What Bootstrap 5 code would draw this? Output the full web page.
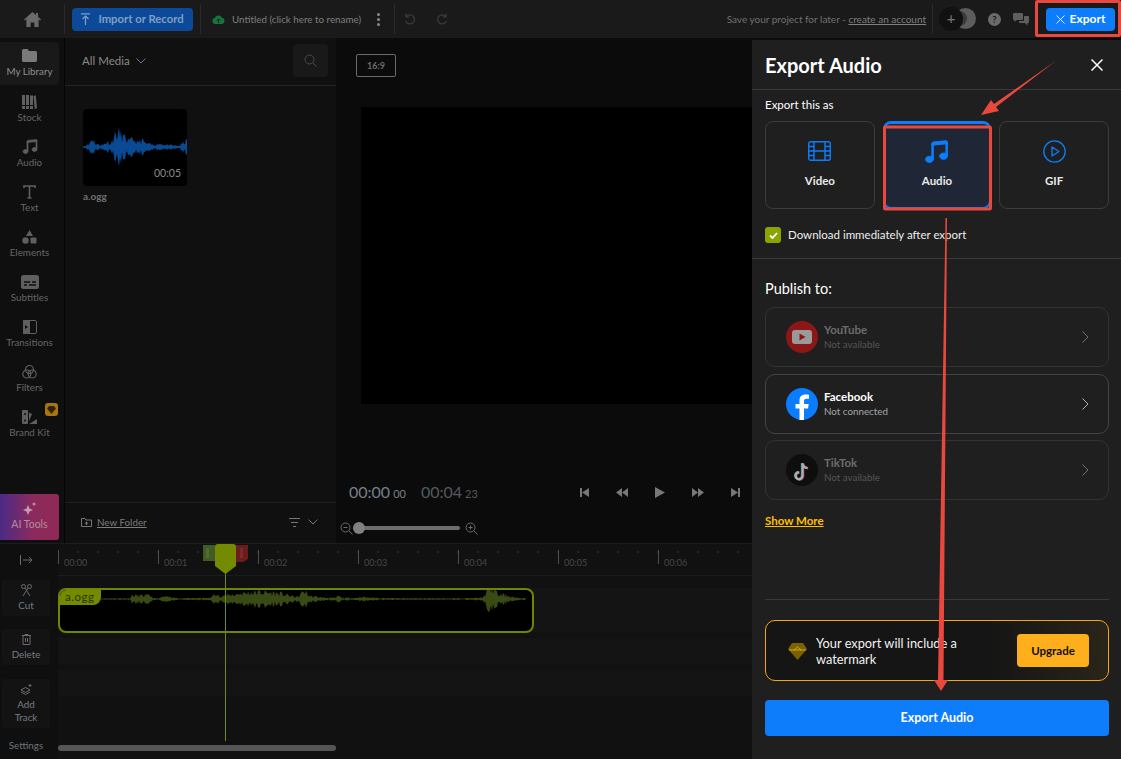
<!doctype html>
<html lang="en">
<head>
<meta charset="utf-8">
<title>Export Audio</title>
<link href="https://cdn.jsdelivr.net/npm/bootstrap@5.3.0/dist/css/bootstrap.min.css" rel="stylesheet">
<style>
html,body{height:100%;}
body{width:1121px;height:759px;overflow:hidden;background:#0b0b0b;font-family:Lato,"Noto Sans",sans-serif;color:#fff;position:relative;}
svg{display:block;flex:none;}
.topbar{height:38px;background:#1a1a1a;padding-right:6px;}
.vsep{width:1px;height:30px;background:#2b2b2b;}
.home{width:64px;}
.btn-import{background:#0c4a99;color:#7f9fc6;font-size:11.3px;font-weight:700;height:23px;width:121px;margin:0 7px;border-radius:4px;}
.doc-title{font-size:9.8px;color:#7e7e7e;margin-left:11px;gap:7px;width:182px;}
.dots{width:3px;margin-left:auto;margin-right:14px;gap:2px;}
.dots i{width:3px;height:3px;border-radius:50%;background:#8a8a8a;display:block;}
.undo{margin-left:9px;gap:20px;}
.save{font-size:10px;color:#707070;margin-right:6px;}
.save u{color:#7f7f7f;}
.avatars{margin:0 13px 0 6px;width:36px;height:26px;position:relative;}
.avatars .plus{position:absolute;left:0;top:1px;width:24px;height:24px;border-radius:50%;background:#111;color:#777;font-size:15px;line-height:23px;text-align:center;}
.avatars .moon{position:absolute;left:16px;top:2px;width:21px;height:21px;border-radius:50%;background:#5d5d5d;}
.avatars .moon2{position:absolute;left:13px;top:5px;width:15px;height:15px;border-radius:50%;background:#3a3a3a;}
.help{margin-right:12px;}
.btn-export{background:#0d7dfb;color:#fff;font-size:12px;font-weight:700;width:69px;height:23px;margin-left:17px;border-radius:4px;gap:5px;}
.workspace{height:721px;}
.left{width:752px;}
.upper{height:505px;}
.sidebar{width:65px;background:#0f0f0f;border-right:1px solid #050505;padding-top:4px;}
.side-item{height:45px;color:#666;font-size:9.8px;line-height:12px;padding-top:6px;position:relative;margin-right:5px;flex:none;}
.side-item.active{background:#191919;color:#8e8e8e;height:43px;margin-bottom:2px;border-radius:0 4px 4px 0;padding-top:5px;}
.side-item svg{height:18px;}
.side-item .pro svg{height:8px;}
.pro{position:absolute;right:1px;top:1px;width:13px;height:13px;border-radius:3px;background:#a8760f;}
.ai{height:46px;margin-right:5px;margin-bottom:3px;border-radius:0 3px 3px 0;background:linear-gradient(90deg,#4b2a86,#8b2a5c 55%,#8f2a55);color:#b78aa2;font-size:10.5px;gap:1px;}
.library{width:271px;background:#101010;}
.lib-head{height:48px;border-bottom:1px solid #242424;padding:0 8px 2px 17px;color:#8a8a8a;font-size:11.5px;gap:6px;}
.search{width:35px;height:33px;margin-left:auto;background:#191919;border-radius:4px;}
.thumb-wrap{padding:23px 18px;flex:1;}
.thumb{width:104px;height:77px;background:#000;border-radius:4px;position:relative;}
.thumb span{position:absolute;right:6px;bottom:4px;font-size:10.5px;color:#8b8b8b;}
.thumb-name{font-size:10px;font-weight:700;color:#6f6f6f;margin-top:3px;}
.lib-foot{height:41px;border-top:1px solid #1f1f1f;padding:0 18px 2px 16px;color:#7d7d7d;font-size:9.8px;gap:5px;}
.sort{margin-right:3px;}
.preview{flex:1;background:#0b0b0b;padding:16px 0 0 20px;min-width:0;}
.ratio{width:40px;height:23px;border:1px solid #6b6b6b;border-radius:2px;color:#6b6b6b;font-size:9px;font-weight:700;}
.stage{height:297px;background:#000;margin:30px 0 0 5px;}
.times{margin:78px 0 0 -7px;height:20px;font-size:16px;color:#73808c;gap:15px;}
.times small{font-size:11px;margin-left:3px;}
.times .dim{color:#55595e;}
.transport{gap:27px;margin-left:87px;}
.zoombar{margin:18px 0 0 -16px;height:16px;}
.track{width:107px;height:4px;border-radius:2px;background:#6e6e6e;position:relative;margin:0 5px 0 0;}
.knob{position:absolute;left:0;top:-4px;width:12px;height:12px;border-radius:50%;background:#808080;}
.timeline{height:216px;background:#111;border-top:1px solid #1c1c1c;position:relative;}
.tools{width:58px;padding-right:6px;background:#0f0f0f;color:#737d86;font-size:9.8px;line-height:13px;text-align:center;}
.tool-top{height:32px;margin-bottom:4px;}
.tool{width:48px;background:#131313;padding:4px 0;gap:3px;border-radius:2px;flex:none;}
.tool.cut{height:36px;margin-bottom:13px;}
.tool.del{height:36px;margin-bottom:14px;padding-top:5px;}
.tool.add{height:49px;padding-top:5px;}
.settings{margin-top:11px;color:#6b747c;}
.tracks{flex:1;min-width:0;}
.ruler{height:32px;flex:none;border-bottom:1px solid #1b1b1b;overflow:hidden;background-image:radial-gradient(circle,#3c3c3c 0.6px,transparent 0.8px);background-size:20px 20px;background-position:10px -2px;background-repeat:repeat-x;}
.tick{width:100px;flex:none;border-left:1px solid #4d4d4d;height:14px;margin-top:6px;padding:7px 0 0 5px;font-size:9px;line-height:12px;color:#474747;}
.row-a{height:44px;margin-top:12px;background:#141414;position:relative;flex:none;}
.clip{width:476px;height:45px;border:2px solid #718500;border-radius:8px;background:#000;position:relative;overflow:hidden;}
.clip-name{position:absolute;left:0;top:0;background:#748a00;color:#2c3300;font-size:11.5px;letter-spacing:.5px;padding:0 7px 1px 5px;line-height:14px;border-radius:6px 0 8px 0;}
.row-b{height:26px;background:#141414;margin-top:6px;flex:none;}
.hscroll{height:6px;width:278px;border-radius:3px;background:#555;margin-top:49px;flex:none;}
.playhead{position:absolute;left:203px;top:0;width:45px;height:197px;}
.panel{width:369px;background:#1f1f1f;margin-top:2px;padding:0 12px 0 13px;}
.panel-head{height:50px;flex:none;margin:0 -12px 0 -13px;padding:0 18px 0 13px;border-bottom:1px solid #3a3a3a;}
.panel-head h1{font-size:20px;font-weight:700;margin:0;}
.lbl{font-size:11.5px;margin:8px 0 9px;line-height:14px;flex:none;}
.types{gap:8px;flex:none;}
.type{width:110px;height:88px;border:1px solid #3c3c3c;border-radius:8px;font-size:11.5px;font-weight:700;gap:9px;padding-top:17px;color:#e8e8e8;line-height:17px;}
.type .ico{height:24px;display:flex;align-items:center;}
.type.on{background:#1f2635;border:2px solid #0d7dfb;border-top-width:3px;width:109px;padding-top:15px;}
.check-row{flex:none;margin:11px -12px 0 -13px;padding:0 13px 8px;height:39px;border-bottom:1px solid #3a3a3a;font-size:11.5px;gap:7px;color:#eee;}
.chk{width:16px;height:16px;border-radius:3px;background:#8aa500;}
.pub{font-size:14.5px;margin:21px 0 9px;line-height:18px;flex:none;}
.dest{height:60px;flex:none;border:1px solid #333;border-radius:10px;padding:0 19px 0 20px;margin-bottom:7px;gap:6px;}
.dest:nth-of-type(n){margin-bottom:7px;}
.dest.live{border-color:#444;margin-bottom:6px;}
.dest .txt{margin-top:-2px;}
.dest .name{font-size:11.5px;font-weight:700;line-height:15px;color:#fff;}
.dest .sub{font-size:9.8px;line-height:14px;color:#a5a5a5;}
.dest.off .name{color:#6c6c6c;}
.dest.off .sub{color:#555;}
.dest .chev{margin-left:auto;}
.more{font-size:11.5px;font-weight:700;color:#ffbf00;text-decoration:underline;margin-top:7px;line-height:14px;flex:none;}
.divider{height:1px;background:#3a3a3a;margin-top:71px;flex:none;}
.mark{height:61px;flex:none;margin-top:20px;border:1px solid #f2a51f;border-radius:10px;background:linear-gradient(90deg,#151515 65%,#2a2518);padding:0 19px 0 22px;gap:9px;font-size:12.8px;line-height:16px;color:#f2f2f2;}
.mark p{margin:0;width:158px;}
.upg{margin-left:auto;width:72px;height:33px;border-radius:4px;background:#ffae1c;color:#111;font-size:11.5px;font-weight:700;}
.go{height:36px;flex:none;margin-top:19px;border-radius:4px;background:#0d7dfb;color:#fff;font-size:12.5px;font-weight:700;}
.marks{position:absolute;left:0;top:0;pointer-events:none;}
</style>
</head>
<body>
<header class="topbar d-flex align-items-center">
  <div class="home d-flex justify-content-center">
    <svg width="17" height="15" viewBox="0 0 17 15" fill="#6a6a6a"><path d="M8.5 0 0 7.4l1 1.1L2.4 7.3V15h4.2v-4.6h3.8V15h4.2V7.3l1.4 1.2 1-1.1-3-2.6V1h-2v2.1z"/></svg>
  </div>
  <div class="vsep"></div>
  <button class="btn btn-import d-flex align-items-center justify-content-center gap-2 p-0 border-0">
    <svg width="9" height="12" viewBox="0 0 9 12" fill="none" stroke="#7f9fc6" stroke-width="1.2"><path d="M0 .8h9M4.500 12V3.500M1.500 6l3-3 3 3"/></svg>Import or Record
  </button>
  <div class="vsep"></div>
  <div class="doc-title d-flex align-items-center">
    <svg width="13" height="9" viewBox="0 0 13 9"><path fill="#14763f" d="M3 9a3 3 0 0 1-.4-5.900A4 4 0 0 1 10 2.700 3.200 3.200 0 0 1 10 9z"/><path stroke="#1a1a1a" stroke-width="1" fill="none" d="M6.500 8V4M5 5.500l1.500-1.500L8 5.500"/></svg>
    <span>Untitled (click here to rename)</span>
    <span class="dots d-flex flex-column"><i></i><i></i><i></i></span>
  </div>
  <div class="vsep"></div>
  <div class="undo d-flex align-items-center">
    <svg width="12" height="12" viewBox="0 0 12 12" fill="none" stroke="#3b3b3b" stroke-width="1.300"><path d="M2.500 3.500A4.500 4.500 0 1 1 1.700 8M2 .8v3h3"/></svg>
    <svg width="12" height="12" viewBox="0 0 12 12" fill="none" stroke="#3b3b3b" stroke-width="1.300"><path d="M9.500 3.500A4.500 4.500 0 1 0 10.300 8M10 .8v3H7"/></svg>
  </div>
  <div class="save ms-auto">Save your project for later - <u>create an account</u></div>
  <div class="vsep"></div>
  <div class="avatars"><span class="moon"></span><span class="moon2"></span><span class="plus">+</span></div>
  <svg width="13" height="13" viewBox="0 0 13 13" class="help"><circle cx="6.500" cy="6.500" r="6.500" fill="#6a6a6a"/><text x="6.500" y="10" text-anchor="middle" font-size="9.500" font-weight="700" fill="#1a1a1a">?</text></svg>
  <svg width="16" height="13" viewBox="0 0 16 13" fill="#5e5e5e"><path d="M0 1a1 1 0 0 1 1-1h8a1 1 0 0 1 1 1v5a1 1 0 0 1-1 1H4L1.500 9V7H1a1 1 0 0 1-1-1z"/><path d="M11 3h4a1 1 0 0 1 1 1v5a1 1 0 0 1-1 1h-.5v2.500L12 10H7a1 1 0 0 1-1-1V8h4a1 1 0 0 0 1-1z"/></svg>
  <button class="btn btn-export d-flex align-items-center justify-content-center p-0 border-0">
    <svg width="9" height="9" viewBox="0 0 9 9" stroke="#fff" stroke-width=".9"><path d="M.5.500l8 8M8.500.500l-8 8"/></svg>Export
  </button>
</header>

<div class="workspace d-flex">
  <div class="left d-flex flex-column">
    <div class="upper d-flex">
      <nav class="sidebar d-flex flex-column">
        <div class="side-item active d-flex flex-column align-items-center">
          <svg width="15" height="18" viewBox="0 0 15 18" fill="#7a7a7a"><path d="M0 3.500A1.500 1.500 0 0 1 1.500 2h4L7 4h6.500A1.500 1.500 0 0 1 15 5.500v8a1.500 1.500 0 0 1-1.500 1.500h-12A1.500 1.500 0 0 1 0 13.500z"/></svg>My Library</div>
        <div class="side-item d-flex flex-column align-items-center">
          <svg width="15" height="18" viewBox="0 0 15 18" fill="#5f5f5f"><path d="M0 2h3v14H0zM4 2h3v14H4zM8 2.500h3v13.500H8zM11.500 3l2.300-.700 1.200 13-2.300.7z"/><path stroke="#0f0f0f" stroke-width="1" d="M0 12.500h11"/></svg>Stock</div>
        <div class="side-item d-flex flex-column align-items-center">
          <svg width="16" height="18" viewBox="0 0 16 17" fill="#5f5f5f" stroke="#5f5f5f" stroke-width=".7"><path d="M6 13c0 1.105-1.120 2-2.500 2S1 14.105 1 13c0-1.104 1.120-2 2.500-2s2.500.896 2.500 2zm9-2c0 1.105-1.120 2-2.500 2s-2.500-.895-2.500-2 1.120-2 2.500-2 2.500.895 2.500 2z"/><path d="M14 11V2h1v9zM6 3v10H5V3z"/><path d="M5 2.905a1 1 0 0 1 .9-.995l8-.8a1 1 0 0 1 1.100.995V3L5 4z"/></svg>Audio</div>
        <div class="side-item d-flex flex-column align-items-center">
          <svg width="13" height="18" viewBox="0 0 13 18" fill="none" stroke="#5f5f5f" stroke-width="1.600"><path d="M1 5V3h11v2M6.500 3v12M4.500 15h4"/></svg>Text</div>
        <div class="side-item d-flex flex-column align-items-center">
          <svg width="15" height="18" viewBox="0 0 15 18" fill="#5f5f5f"><path d="M7.500 2 11 8H4z"/><circle cx="3.500" cy="12.500" r="3.200"/><rect x="8.500" y="9.500" width="6" height="6" rx="1"/></svg>Elements</div>
        <div class="side-item d-flex flex-column align-items-center">
          <svg width="18" height="18" viewBox="0 0 18 18"><rect y="2" width="18" height="14" rx="2.500" fill="#5f5f5f"/><path stroke="#0f0f0f" stroke-width="1.300" d="M3 9h6M11 9h4M3 12h3M8 12h7"/></svg>Subtitles</div>
        <div class="side-item d-flex flex-column align-items-center">
          <svg width="14" height="18" viewBox="0 0 14 18"><rect x=".5" y="2.500" width="13" height="13" rx="1.500" fill="none" stroke="#5f5f5f"/><rect y="2" width="7" height="14" fill="#5f5f5f"/><path fill="#0f0f0f" d="M2 7l3 2-3 2z"/></svg>Transitions</div>
        <div class="side-item d-flex flex-column align-items-center">
          <svg width="15" height="18" viewBox="0 0 15 18" fill="none" stroke="#5f5f5f" stroke-width="1.200"><circle cx="7.500" cy="6.500" r="4"/><circle cx="4.800" cy="11" r="4"/><circle cx="10.200" cy="11" r="4"/></svg>Filters</div>
        <div class="side-item d-flex flex-column align-items-center">
          <svg width="16" height="18" viewBox="0 0 16 18" fill="#5f5f5f"><rect y="2" width="6" height="14" rx="1"/><path d="M7 4.500l3 1.500 -3 7zM7 16l8-5v5z"/><circle cx="3" cy="12.500" r="1" fill="#0f0f0f"/><circle cx="3" cy="6" r="1" fill="#0f0f0f"/></svg>Brand Kit
          <span class="pro d-flex align-items-center justify-content-center"><svg width="9" height="8" viewBox="0 0 9 8" fill="#332300"><path d="M2 0h5l2 2.500L4.500 8 0 2.500z"/></svg></span>
        </div>
        <div class="ai mt-auto d-flex flex-column align-items-center justify-content-center">
          <svg width="14" height="14" viewBox="0 0 14 14" fill="#c79ab2"><path d="M5 3l1.500 3.500L10 8 6.500 9.500 5 13 3.500 9.500 0 8l3.500-1.500z"/><path d="M11 0l.7 1.300L13 2l-1.300.7L11 4l-.7-1.300L9 2l1.300-.7z"/></svg>AI Tools
        </div>
      </nav>
      <section class="library d-flex flex-column">
        <div class="lib-head d-flex align-items-center">All Media
          <svg width="10" height="6" viewBox="0 0 10 6" fill="none" stroke="#777" stroke-width="1"><path d="M.5.500 5 5 9.500.500"/></svg>
          <span class="search d-flex align-items-center justify-content-center"><svg width="13" height="13" viewBox="0 0 13 13" fill="none" stroke="#4b4b4b"><circle cx="5.500" cy="5.500" r="4.500"/><path d="M9 9l3.500 3.500"/></svg></span>
        </div>
        <div class="thumb-wrap">
          <div class="thumb"><svg id="wave1" width="104" height="77" viewBox="0 0 104 77"></svg><span>00:05</span></div>
          <div class="thumb-name">a.ogg</div>
        </div>
        <div class="lib-foot d-flex align-items-center">
          <svg width="11" height="10" viewBox="0 0 11 10" fill="none" stroke="#777"><path d="M.5 1.500h3.500l1 1.500h5.500v6.500H.5zM5.500 4.500v3.500M3.800 6.200h3.400"/></svg>
          <u>New Folder</u>
          <svg class="ms-auto sort" width="11" height="9" viewBox="0 0 11 9" stroke="#777"><path d="M0 .5h11M2 4.500h7M4 8.500h3"/></svg>
          <svg width="10" height="6" viewBox="0 0 10 6" fill="none" stroke="#777"><path d="M.5.500 5 5 9.500.500"/></svg>
        </div>
      </section>
      <section class="preview">
        <div class="ratio d-flex align-items-center justify-content-center">16:9</div>
        <div class="stage"></div>
        <div class="times d-flex align-items-center">
          <span>00:00<small>00</small></span><span class="dim">00:04<small>23</small></span>
          <div class="transport d-flex align-items-center">
            <svg width="9" height="9" viewBox="0 0 9 9" fill="#777"><path d="M0 0h2v9H0zM9 0v9L2 4.500z"/></svg>
            <svg width="12" height="9" viewBox="0 0 12 9" fill="#777"><path d="M6 0v9L0 4.500zM12 0v9L6 4.500z"/></svg>
            <svg width="10" height="11" viewBox="0 0 10 11" fill="#777"><path d="M0 0l10 5.500L0 11z"/></svg>
            <svg width="12" height="9" viewBox="0 0 12 9" fill="#777"><path d="M0 0l6 4.500L0 9zM6 0l6 4.500L6 9z"/></svg>
            <svg width="9" height="9" viewBox="0 0 9 9" fill="#777"><path d="M0 0l7 4.500L0 9zM7 0h2v9H7z"/></svg>
          </div>
        </div>
        <div class="zoombar d-flex align-items-center">
          <svg width="13" height="13" viewBox="0 0 13 13" fill="none" stroke="#6c6c6c"><circle cx="5.500" cy="5.500" r="4.500"/><path d="M9 9l3.500 3.500M3.500 5.500h4"/></svg>
          <div class="track"><span class="knob"></span></div>
          <svg width="13" height="13" viewBox="0 0 13 13" fill="none" stroke="#6c6c6c"><circle cx="5.500" cy="5.500" r="4.500"/><path d="M9 9l3.500 3.500M3.500 5.500h4M5.500 3.500v4"/></svg>
        </div>
      </section>
    </div>
    <section class="timeline d-flex">
      <div class="tools d-flex flex-column align-items-center">
        <div class="tool-top d-flex align-items-center"><svg width="13" height="10" viewBox="0 0 13 10" fill="none" stroke="#6c6c6c"><path d="M.5 0v10M3 5h9M9 2l3 3-3 3"/></svg></div>
        <div class="tool cut d-flex flex-column align-items-center"><svg width="11" height="12" viewBox="0 0 11 12" fill="none" stroke="#6c6c6c"><circle cx="2.500" cy="2.500" r="2"/><circle cx="8.500" cy="2.500" r="2"/><path d="M4 4l5 8M7 4l-5 8"/></svg>Cut</div>
        <div class="tool del d-flex flex-column align-items-center"><svg width="9" height="11" viewBox="0 0 9 11" fill="none" stroke="#6c6c6c"><path d="M0 1.500h9M3 1.500V.5h3v1M1 1.500v9h7v-9M3.500 4v4M5.500 4v4"/></svg>Delete</div>
        <div class="tool add d-flex flex-column align-items-center"><svg width="12" height="11" viewBox="0 0 12 11" fill="none" stroke="#6c6c6c"><path d="M1 6l4.500-2.500L10 6 5.500 8.500zM1 8l4.500 2.500L10 8M10 0v3M8.500 1.500h3"/></svg><span>Add<br>Track</span></div>
        <div class="settings">Settings</div>
      </div>
      <div class="tracks d-flex flex-column">
        <div class="ruler d-flex">
          <div class="tick">00:00</div><div class="tick">00:01</div><div class="tick">00:02</div><div class="tick">00:03</div><div class="tick">00:04</div><div class="tick">00:05</div><div class="tick">00:06</div>
        </div>
        <div class="row-a">
          <div class="clip"><svg id="wave2" width="472" height="41" viewBox="0 0 472 41"></svg><span class="clip-name">a.ogg</span></div>
        </div>
        <div class="row-b"></div>
        <div class="row-b"></div>
        <div class="hscroll"></div>
      </div>
      <svg class="playhead" width="45" height="197" viewBox="0 0 45 197">
        <path fill="#3f5c24" d="M0 1h12v16H0z"/><path fill="#5f7d3c" opacity=".5" d="M3 4h3v10H3z"/>
        <path fill="#6b1c1c" d="M32 1h13v14l-5 3h-8z"/><path fill="#8b3a3a" opacity=".5" d="M37 4h3v10h-3z"/>
        <rect x="22" y="28" width="1" height="169" fill="#748a00"/>
        <path fill="#748a00" d="M15 0h15a3 3 0 0 1 3 3v19l-10.500 8L12 22V3a3 3 0 0 1 3-3z"/>
      </svg>
    </section>
  </div>

  <aside class="panel d-flex flex-column">
    <div class="panel-head d-flex align-items-center justify-content-between">
      <h1>Export Audio</h1>
      <svg width="12" height="12" viewBox="0 0 12 12" stroke="#fff" stroke-width="1.500"><path d="M.5.500l11 11M11.500.500l-11 11"/></svg>
    </div>
    <div class="lbl">Export this as</div>
    <div class="types d-flex">
      <div class="type d-flex flex-column align-items-center">
        <span class="ico"><svg width="23" height="20" viewBox="0 0 23 20" fill="none" stroke="#0d7dfb" stroke-width="1.400"><rect x=".7" y=".7" width="21.600" height="18.600" rx="2"/><path d="M6 .7v18.600M17 .7v18.600M.7 10h21.600M.7 5.500H6M.7 14.500H6M17 5.500h5.300M17 14.500h5.300"/></svg></span>Video
      </div>
      <div class="type on d-flex flex-column align-items-center">
        <span class="ico"><svg width="25" height="25" viewBox="0 0 16 16" fill="#0d7dfb" stroke="#0d7dfb" stroke-width=".6"><path d="M6 13c0 1.105-1.120 2-2.500 2S1 14.105 1 13c0-1.104 1.120-2 2.500-2s2.500.896 2.500 2zm9-2c0 1.105-1.120 2-2.500 2s-2.500-.895-2.500-2 1.120-2 2.500-2 2.500.895 2.500 2z"/><path d="M14 11V2h1v9zM6 3v10H5V3z"/><path d="M5 2.905a1 1 0 0 1 .9-.995l8-.8a1 1 0 0 1 1.100.995V3L5 4z"/></svg></span>Audio
      </div>
      <div class="type d-flex flex-column align-items-center">
        <span class="ico"><svg width="23" height="23" viewBox="0 0 23 23" fill="none" stroke="#0d7dfb" stroke-width="1.300"><circle cx="11.500" cy="11.500" r="10.700"/><path stroke-linejoin="round" d="M9 7l7 4.500L9 16z"/></svg></span>GIF
      </div>
    </div>
    <div class="check-row d-flex align-items-center">
      <span class="chk d-flex align-items-center justify-content-center"><svg width="9" height="7" viewBox="0 0 9 7" fill="none" stroke="#fff" stroke-width="1.800"><path d="M1 3.500l2.500 2.500L8 1"/></svg></span>
      Download immediately after export
    </div>
    <div class="pub">Publish to:</div>
    <div class="dest off d-flex align-items-center">
      <svg width="32" height="32" viewBox="0 0 32 32"><circle cx="16" cy="16" r="16" fill="#8b1717"/><rect x="6" y="9" width="20" height="14" rx="3" fill="#9a9a9a"/><path fill="#8b1717" d="M13.500 12.500l6 3.500-6 3.500z"/></svg>
      <div class="txt"><div class="name">YouTube</div><div class="sub">Not available</div></div>
      <svg class="chev" width="7" height="12" viewBox="0 0 7 12" fill="none" stroke="#6f6f6f"><path d="M.5.500 6 6 .5 11.500"/></svg>
    </div>
    <div class="dest live d-flex align-items-center">
      <svg width="32" height="32" viewBox="0 0 32 32"><circle cx="16" cy="16" r="16" fill="#0a7cff"/><path fill="#fff" d="M13.500 32V20.500H9.500V16h4v-3.500C13.500 8.500 16 6.500 19.500 6.500c1.700 0 3 .2 3.500.3v4h-2.500c-2 0-2.500 1-2.500 2.500V16h4.700l-.7 4.500h-4V32z"/></svg>
      <div class="txt"><div class="name">Facebook</div><div class="sub">Not connected</div></div>
      <svg class="chev" width="7" height="12" viewBox="0 0 7 12" fill="none" stroke="#b5b5b5"><path d="M.5.500 6 6 .5 11.500"/></svg>
    </div>
    <div class="dest off d-flex align-items-center">
      <svg width="32" height="32" viewBox="0 0 32 32"><circle cx="16" cy="16" r="16" fill="#0e0e0e"/><path fill="none" stroke="#2e8f93" stroke-width="2.400" d="M16 9v12.500a3.500 3.500 0 1 1-3.500-3.500M16 9c.4 2.800 2.300 4.500 5 4.700"/><path fill="none" stroke="#9b2c44" stroke-width="2.400" d="M17.200 9.600v12.500a3.500 3.500 0 1 1-3.500-3.500M17.200 9.600c.4 2.800 2.300 4.500 5 4.700"/><path fill="none" stroke="#b0b0b0" stroke-width="2.200" d="M16.600 9.300v12.500a3.500 3.500 0 1 1-3.500-3.500M16.600 9.300c.4 2.800 2.300 4.500 5 4.700"/></svg>
      <div class="txt"><div class="name">TikTok</div><div class="sub">Not available</div></div>
      <svg class="chev" width="7" height="12" viewBox="0 0 7 12" fill="none" stroke="#6f6f6f"><path d="M.5.500 6 6 .5 11.500"/></svg>
    </div>
    <div class="more">Show More</div>
    <div class="divider"></div>
    <div class="mark d-flex align-items-center">
      <svg width="19" height="18" viewBox="0 0 19 18"><path fill="#7a6100" d="M4 1h11l4 6-9.500 11L0 7z"/><path stroke="#d6ad10" fill="none" d="M1 8h17M6 8l3.500-3L13 8"/></svg>
      <p>Your export will include a watermark</p>
      <div class="upg d-flex align-items-center justify-content-center">Upgrade</div>
    </div>
    <div class="go d-flex align-items-center justify-content-center">Export Audio</div>
  </aside>
</div>

<svg class="marks" width="1121" height="759" viewBox="0 0 1121 759" fill="none">
  <rect x="1036.500" y="1.500" width="83" height="34" rx="1" stroke="#e9483f" stroke-width="3"/>
  <rect x="884.500" y="127" width="106" height="82" rx="1" stroke="#e9483f" stroke-width="3"/>
  <path fill="#e9483f" d="M1057 60 994 104 991 100 981 115 999 111 996 107z"/>
  <path fill="#e9483f" d="M947 218 945.500 218 938 680 934 680 941 691 948 680 943.500 680z"/>
</svg>

<script>
(function(){
  function wave(id,cy,pts,color,step){
    var el=document.getElementById(id),x,j=0,seed=11;
    var w=pts[pts.length-1][0];
    function rnd(){seed=(seed*16807)%2147483647;return seed/2147483647;}
    var up=[],dn=[];
    for(x=pts[0][0];x<=w;x+=step){
      while(j<pts.length-2&&x>pts[j+1][0])j++;
      var t=(x-pts[j][0])/(pts[j+1][0]-pts[j][0]);
      var a=pts[j][1]+(pts[j+1][1]-pts[j][1])*t;
      a=a*(0.3+0.7*rnd());
      up.push(x.toFixed(1)+' '+(cy-a).toFixed(1));
      dn.unshift(x.toFixed(1)+' '+(cy+a).toFixed(1));
    }
    var p=document.createElementNS('http://www.w3.org/2000/svg','path');
    p.setAttribute('d','M'+up.concat(dn).join('L')+'Z');
    p.setAttribute('fill',color);
    el.appendChild(p);
  }
  wave('wave1',38,[[0,1],[6,4],[9,13],[13,4],[20,3],[24,8],[28,5],[31,16],[36,20],[41,14],[46,8],[50,12],[54,6],[59,10],[63,5],[70,3],[76,5],[84,3],[92,2],[97,2],[100,6],[104,9]],'#0a4a92',1);
  wave('wave2',9,[[40,.8],[60,1],[62,1],[70,1],[72,5],[90,5],[94,1],[100,1],[102,3],[112,3],[118,1],[150,1.500],[152,5],[170,5.500],[180,8],[200,10],[220,8],[232,4],[238,3],[244,12],[250,4],[264,2],[276,1.500],[278,5],[282,1.500],[296,1.500],[300,3],[310,2],[330,1],[360,1],[380,1],[392,1],[400,1],[420,1.500],[424,4],[428,14],[434,14],[438,6],[444,6],[450,4],[456,1.500],[466,1]],'#3a4a14',1);
})();
</script>
</body>
</html>
